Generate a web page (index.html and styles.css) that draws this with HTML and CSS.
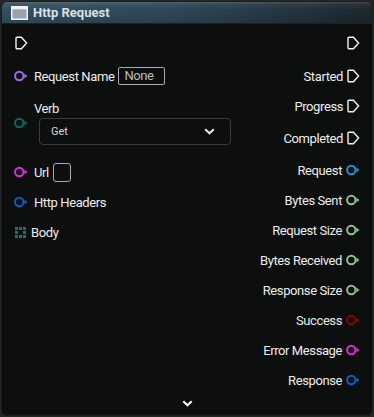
FILE: index.html
```html
<!DOCTYPE html>
<html lang="en">

<head>
  <meta charset="UTF-8">
  <meta name="viewport" content="width=device-width, initial-scale=1.0">
  <title>Http Request</title>
  <link rel="stylesheet" href="styles.css">
</head>

<body>
  <div class="node">
    <div class="header">
      <svg class="node-icon" width="17" height="14" viewBox="0 0 17 14">
        <rect x="0.75" y="0.75" width="15.5" height="12.5" fill="#9aa3ab" stroke="#f2f2f2" stroke-width="1.5" />
        <rect x="0.75" y="0.75" width="15.5" height="2.5" fill="#f2f2f2" />
      </svg>
      <span class="title">Http Request</span>
    </div>

    <div class="content">
      <div class="inputs">
        <div class="row exec-row">
          <svg class="exec" width="13" height="14" viewBox="0 0 13 14">
            <path d="M2.2 1.2 H6.4 L11.6 7 L6.4 12.8 H2.2 Q1 12.8 1 11.6 V2.4 Q1 1.2 2.2 1.2 Z" />
          </svg>
        </div>
        <div class="row request-name">
          <svg class="pin name" width="14" height="12" viewBox="0 0 14 12">
            <circle cx="5.3" cy="6" r="4.2" />
            <polygon points="10.4,3.5 13.4,6 10.4,8.5" />
          </svg>
          <span>Request Name</span>
          <span class="text-box">None</span>
        </div>
        <div class="verb">
          <svg class="pin enum" width="14" height="12" viewBox="0 0 14 12">
            <circle cx="5.3" cy="6" r="4.2" />
            <polygon points="10.4,3.5 13.4,6 10.4,8.5" />
          </svg>
          <div class="verb-field">
            <span class="verb-label">Verb</span>
            <div class="select">
              <span>Get</span>
              <svg width="11" height="7" viewBox="0 0 11 7">
                <path d="M1.2 1.2 L5.5 5.3 L9.8 1.2" />
              </svg>
            </div>
          </div>
        </div>
        <div class="row url">
          <svg class="pin string" width="14" height="12" viewBox="0 0 14 12">
            <circle cx="5.3" cy="6" r="4.2" />
            <polygon points="10.4,3.5 13.4,6 10.4,8.5" />
          </svg>
          <span>Url</span>
          <span class="check-box"></span>
        </div>
        <div class="row">
          <svg class="pin struct" width="14" height="12" viewBox="0 0 14 12">
            <circle cx="5.3" cy="6" r="4.2" />
            <polygon points="10.4,3.5 13.4,6 10.4,8.5" />
          </svg>
          <span>Http Headers</span>
        </div>
        <div class="row body-row">
          <svg class="grid" width="11" height="11" viewBox="0 0 11 11">
            <rect x="0" y="0" width="3" height="3" />
            <rect x="4" y="0" width="3" height="3" />
            <rect x="8" y="0" width="3" height="3" />
            <rect x="0" y="4" width="3" height="3" />
            <rect x="8" y="4" width="3" height="3" />
            <rect x="0" y="8" width="3" height="3" />
            <rect x="4" y="8" width="3" height="3" />
            <rect x="8" y="8" width="3" height="3" />
          </svg>
          <span>Body</span>
        </div>
      </div>

      <div class="outputs">
        <div class="row">
          <svg class="exec" width="13" height="14" viewBox="0 0 13 14">
            <path d="M2.2 1.2 H6.4 L11.6 7 L6.4 12.8 H2.2 Q1 12.8 1 11.6 V2.4 Q1 1.2 2.2 1.2 Z" />
          </svg>
        </div>
        <div class="row gap-3">
          <span>Started</span>
          <svg class="exec" width="13" height="14" viewBox="0 0 13 14">
            <path d="M2.2 1.2 H6.4 L11.6 7 L6.4 12.8 H2.2 Q1 12.8 1 11.6 V2.4 Q1 1.2 2.2 1.2 Z" />
          </svg>
        </div>
        <div class="row">
          <span>Progress</span>
          <svg class="exec" width="13" height="14" viewBox="0 0 13 14">
            <path d="M2.2 1.2 H6.4 L11.6 7 L6.4 12.8 H2.2 Q1 12.8 1 11.6 V2.4 Q1 1.2 2.2 1.2 Z" />
          </svg>
        </div>
        <div class="row gap-2">
          <span>Completed</span>
          <svg class="exec" width="13" height="14" viewBox="0 0 13 14">
            <path d="M2.2 1.2 H6.4 L11.6 7 L6.4 12.8 H2.2 Q1 12.8 1 11.6 V2.4 Q1 1.2 2.2 1.2 Z" />
          </svg>
        </div>
        <div class="row gap-2">
          <span>Request</span>
          <svg class="pin object" width="14" height="12" viewBox="0 0 14 12">
            <circle cx="5.3" cy="6" r="4.2" />
            <polygon points="10.4,3.5 13.4,6 10.4,8.5" />
          </svg>
        </div>
        <div class="row">
          <span>Bytes Sent</span>
          <svg class="pin int" width="14" height="12" viewBox="0 0 14 12">
            <circle cx="5.3" cy="6" r="4.2" />
            <polygon points="10.4,3.5 13.4,6 10.4,8.5" />
          </svg>
        </div>
        <div class="row">
          <span>Request Size</span>
          <svg class="pin int" width="14" height="12" viewBox="0 0 14 12">
            <circle cx="5.3" cy="6" r="4.2" />
            <polygon points="10.4,3.5 13.4,6 10.4,8.5" />
          </svg>
        </div>
        <div class="row">
          <span>Bytes Received</span>
          <svg class="pin int" width="14" height="12" viewBox="0 0 14 12">
            <circle cx="5.3" cy="6" r="4.2" />
            <polygon points="10.4,3.5 13.4,6 10.4,8.5" />
          </svg>
        </div>
        <div class="row">
          <span>Response Size</span>
          <svg class="pin int" width="14" height="12" viewBox="0 0 14 12">
            <circle cx="5.3" cy="6" r="4.2" />
            <polygon points="10.4,3.5 13.4,6 10.4,8.5" />
          </svg>
        </div>
        <div class="row">
          <span>Success</span>
          <svg class="pin bool" width="14" height="12" viewBox="0 0 14 12">
            <circle cx="5.3" cy="6" r="4.2" />
            <polygon points="10.4,3.5 13.4,6 10.4,8.5" />
          </svg>
        </div>
        <div class="row">
          <span>Error Message</span>
          <svg class="pin string" width="14" height="12" viewBox="0 0 14 12">
            <circle cx="5.3" cy="6" r="4.2" />
            <polygon points="10.4,3.5 13.4,6 10.4,8.5" />
          </svg>
        </div>
        <div class="row">
          <span>Response</span>
          <svg class="pin struct" width="14" height="12" viewBox="0 0 14 12">
            <circle cx="5.3" cy="6" r="4.2" />
            <polygon points="10.4,3.5 13.4,6 10.4,8.5" />
          </svg>
        </div>
      </div>
    </div>

    <div class="footer">
      <svg width="11" height="7" viewBox="0 0 11 7">
        <path d="M1.3 1.3 L5.5 5.3 L9.7 1.3" />
      </svg>
    </div>
  </div>
</body>

</html>
```

FILE: styles.css
```css
* {
  box-sizing: border-box;
}

body {
  margin: 0;
  padding: 1px;
  width: 374px;
  height: 417px;
  background: #262626;
  font-family: Roboto, "Liberation Sans", sans-serif;
  font-size: 13px;
  letter-spacing: -0.4px;
  color: #ececec;
}

.node {
  width: 372px;
  height: 415px;
  display: flex;
  flex-direction: column;
  background: #0d0f0e;
  border-radius: 6px;
  border: 1px solid #1b1d1c;
  overflow: hidden;
}

.header {
  height: 23px;
  display: flex;
  align-items: center;
  gap: 5px;
  padding-left: 9px;
  background:
    linear-gradient(to bottom, rgba(255, 255, 255, 0.18) 0, rgba(255, 255, 255, 0.05) 2px, rgba(0, 0, 0, 0) 8px, rgba(0, 0, 0, 0.12) 100%),
    linear-gradient(to right, #34505f 0, #2f4858 45%, #24343e 80%, #1c262d 100%);
  border-bottom: 1px solid #1a2126;
}

.node-icon {
  flex: none;
}

.title {
  font-weight: bold;
  font-size: 13px;
  letter-spacing: 0;
  color: #d9e0e6;
}

.content {
  flex: 1;
  display: flex;
  justify-content: space-between;
  padding-top: 4px;
}

.inputs {
  display: flex;
  flex-direction: column;
  padding-left: 12px;
}

.exec-row {
  padding-left: 1px;
}

.outputs {
  display: flex;
  flex-direction: column;
  align-items: flex-end;
  padding-right: 12px;
}

.row {
  height: 30px;
  display: flex;
  align-items: center;
  gap: 6px;
  white-space: nowrap;
}

.outputs .row {
  gap: 4px;
}

.gap-2 {
  margin-top: 2px;
}

.gap-3,
.request-name {
  margin-top: 3px;
}

.exec path {
  fill: none;
  stroke: #f4f4f4;
  stroke-width: 1.4;
}

.pin circle {
  fill: none;
  stroke: currentColor;
  stroke-width: 2;
}

.pin polygon {
  fill: currentColor;
}

.pin.name {
  color: #a866e8;
}

.pin.enum {
  color: #0b6a5d;
}

.pin.string {
  color: #e02cd2;
}

.pin.struct {
  color: #0b5fc7;
}

.pin.object {
  color: #1c93d8;
}

.pin.int {
  color: #8fc291;
}

.pin.bool {
  color: #8a0404;
}

.text-box {
  height: 18px;
  width: 47px;
  margin-left: -2px;
  padding-left: 5px;
  border: 1px solid #a9a9a9;
  border-radius: 2px;
  color: #bdbdbd;
  line-height: 16px;
}

.verb {
  display: flex;
  align-items: center;
  gap: 6px;
  margin-top: 10px;
}

.verb-field {
  display: flex;
  flex-direction: column;
}

.verb-label {
  line-height: 16px;
}

.select {
  width: 192px;
  height: 27px;
  margin-left: 5px;
  margin-top: 1px;
  display: flex;
  align-items: center;
  justify-content: space-between;
  padding: 0 15px 0 11px;
  border: 1px solid #3a3c3b;
  border-radius: 4px;
  font-size: 11px;
  letter-spacing: 0;
  color: #d6d6d6;
}

.select path,
.footer path {
  fill: none;
  stroke: #e6e6e6;
  stroke-width: 2;
}

.url {
  margin-top: 12px;
}

.check-box {
  width: 18px;
  height: 19px;
  margin-left: -2px;
  border: 1px solid #a9a9a9;
  border-radius: 3px;
}

.body-row {
  margin-left: 1px;
  gap: 5px;
}

.grid rect {
  fill: #0e7a6c;
}

.footer {
  height: 20px;
  display: flex;
  justify-content: center;
  align-items: flex-start;
  padding-top: 5px;
}

.footer path {
  stroke: #f4f4f4;
  stroke-width: 2.2;
}
```
